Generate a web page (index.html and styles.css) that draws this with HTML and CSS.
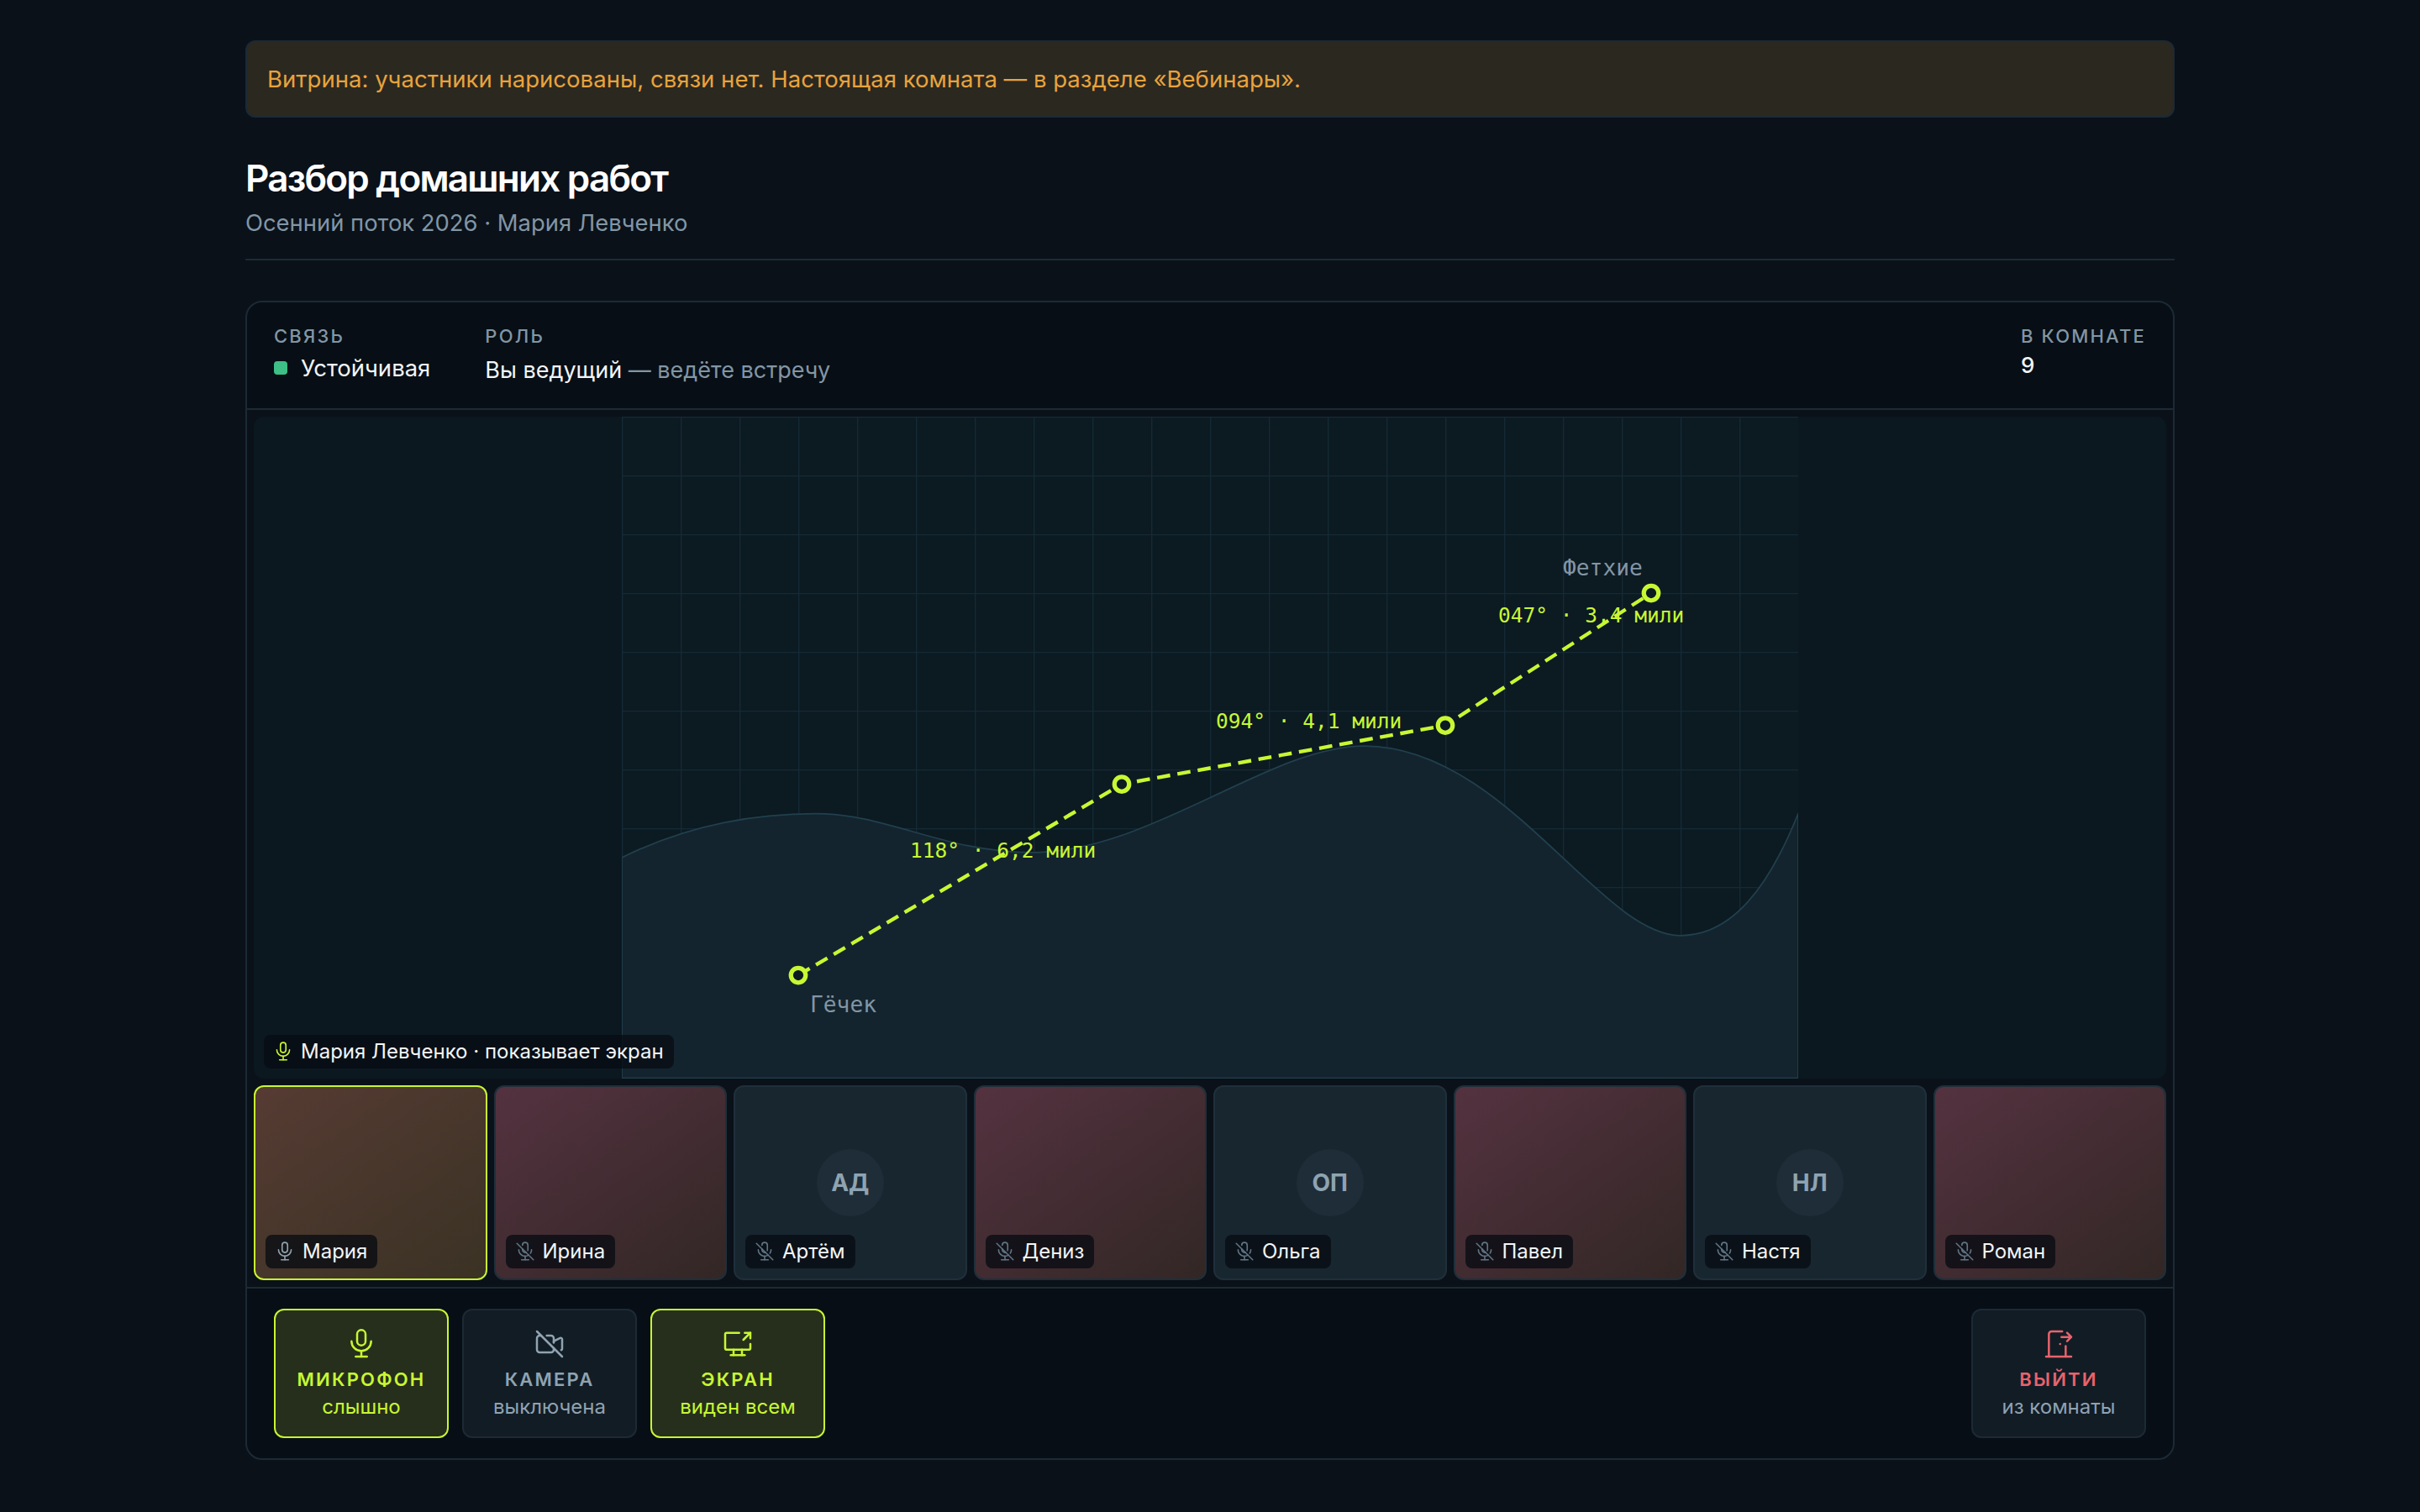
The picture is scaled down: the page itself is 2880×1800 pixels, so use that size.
FILE: index.html
```html
<!DOCTYPE html>
<html lang="ru">
<head>
    <meta charset="UTF-8">
    <title>Разбор домашних работ</title>
    <link rel="stylesheet" href="styles.css">
</head>
<body>
    <svg class="icon-defs" width="0" height="0">
        <symbol id="i-mic" viewBox="0 0 24 24">
            <path d="M9 5a3 3 0 0 1 6 0v5a3 3 0 0 1 -6 0z"/>
            <path d="M5 10a7 7 0 0 0 14 0"/>
            <path d="M8 21h8"/>
            <path d="M12 17v4"/>
        </symbol>
        <symbol id="i-mic-off" viewBox="0 0 24 24">
            <path d="M3 3l18 18"/>
            <path d="M9 5a3 3 0 0 1 6 0v5a3 3 0 0 1 -.13 .874m-2 2a3 3 0 0 1 -3.87 -2.872v-1"/>
            <path d="M5 10a7 7 0 0 0 10.846 5.85m2 -2a6.967 6.967 0 0 0 1.152 -3.85"/>
            <path d="M8 21h8"/>
            <path d="M12 17v4"/>
        </symbol>
        <symbol id="i-video-off" viewBox="0 0 24 24">
            <path d="M3 3l18 18"/>
            <path d="M15 11v-1l4.553 -2.276a1 1 0 0 1 1.447 .894v6.764a1 1 0 0 1 -.675 .946"/>
            <path d="M10 6h3a2 2 0 0 1 2 2v3m0 4v1a2 2 0 0 1 -2 2h-8a2 2 0 0 1 -2 -2v-8a2 2 0 0 1 2 -2h1"/>
        </symbol>
        <symbol id="i-share" viewBox="0 0 24 24">
            <path d="M21 12v3a1 1 0 0 1 -1 1h-16a1 1 0 0 1 -1 -1v-10a1 1 0 0 1 1 -1h9"/>
            <path d="M7 20h10"/>
            <path d="M9 16v4"/>
            <path d="M15 16v4"/>
            <path d="M17 4h4v4"/>
            <path d="M16 9l5 -5"/>
        </symbol>
        <symbol id="i-exit" viewBox="0 0 24 24">
            <path d="M13 12v.01"/>
            <path d="M3 21h18"/>
            <path d="M5 21v-16a2 2 0 0 1 2 -2h7.5m2.5 10.5v7.5"/>
            <path d="M14 7h7m-3 -3l3 3l-3 3"/>
        </symbol>
    </svg>

    <div class="container">
        <div class="notice">Витрина: участники нарисованы, связи нет. Настоящая комната — в разделе «Вебинары».</div>

        <div class="page-head">
            <h1>Разбор домашних работ</h1>
            <p>Осенний поток 2026 · Мария Левченко</p>
        </div>

        <div class="room">
            <div class="room-bar">
                <div class="stat">
                    <div class="stat-label">Связь</div>
                    <div class="stat-value status"><span class="status-dot"></span>Устойчивая</div>
                </div>
                <div class="stat">
                    <div class="stat-label">Роль</div>
                    <div class="stat-value role">Вы ведущий <span class="muted">— ведёте встречу</span></div>
                </div>
                <div class="stat stat-right">
                    <div class="stat-label">В комнате</div>
                    <div class="stat-value count">9</div>
                </div>
            </div>

            <div class="room-body">
                <div class="stage">
                    <svg class="chart" viewBox="0 0 1600 900">
                        <defs>
                            <pattern id="grid" width="80" height="80" patternUnits="userSpaceOnUse">
                                <path class="grid-line" d="M80 0H0V80"/>
                            </pattern>
                        </defs>
                        <rect class="chart-bg" width="1600" height="900"/>
                        <rect class="chart-grid" fill="url(#grid)" width="1600" height="900"/>
                        <path class="land" d="M0 600C80 560 170 540 264 540C360 540 440 593 557 593C720 593 880 448 1010 448C1200 448 1330 706 1440 706C1510 706 1560 640 1600 540V900H0Z"/>
                        <path class="route" d="M240 760L680 500L1120 420L1400 240"/>
                        <circle class="stop" cx="240" cy="760" r="10"/>
                        <circle class="stop" cx="680" cy="500" r="10"/>
                        <circle class="stop" cx="1120" cy="420" r="10"/>
                        <circle class="stop" cx="1400" cy="240" r="10"/>
                        <text class="place" x="256" y="810">Гёчек</text>
                        <text class="place" x="1280" y="216">Фетхие</text>
                        <text class="leg" x="392" y="600">118° · 6,2 мили</text>
                        <text class="leg" x="808" y="424">094° · 4,1 мили</text>
                        <text class="leg" x="1192" y="280">047° · 3,4 мили</text>
                    </svg>
                    <div class="name-tag stage-tag"><svg class="tag-icon on"><use href="#i-mic"/></svg>Мария Левченко · показывает экран</div>
                </div>

                <div class="tiles">
                    <div class="tile me"><div class="name-tag"><svg class="tag-icon"><use href="#i-mic"/></svg>Мария</div></div>
                    <div class="tile video"><div class="name-tag"><svg class="tag-icon off"><use href="#i-mic-off"/></svg>Ирина</div></div>
                    <div class="tile"><div class="avatar">АД</div><div class="name-tag"><svg class="tag-icon off"><use href="#i-mic-off"/></svg>Артём</div></div>
                    <div class="tile video"><div class="name-tag"><svg class="tag-icon off"><use href="#i-mic-off"/></svg>Дениз</div></div>
                    <div class="tile"><div class="avatar">ОП</div><div class="name-tag"><svg class="tag-icon off"><use href="#i-mic-off"/></svg>Ольга</div></div>
                    <div class="tile video"><div class="name-tag"><svg class="tag-icon off"><use href="#i-mic-off"/></svg>Павел</div></div>
                    <div class="tile"><div class="avatar">НЛ</div><div class="name-tag"><svg class="tag-icon off"><use href="#i-mic-off"/></svg>Настя</div></div>
                    <div class="tile video"><div class="name-tag"><svg class="tag-icon off"><use href="#i-mic-off"/></svg>Роман</div></div>
                </div>
            </div>

            <div class="controls">
                <button class="control active">
                    <svg class="control-icon"><use href="#i-mic"/></svg>
                    <span class="control-label">Микрофон</span>
                    <span class="control-sub">слышно</span>
                </button>
                <button class="control">
                    <svg class="control-icon"><use href="#i-video-off"/></svg>
                    <span class="control-label">Камера</span>
                    <span class="control-sub">выключена</span>
                </button>
                <button class="control active">
                    <svg class="control-icon"><use href="#i-share"/></svg>
                    <span class="control-label">Экран</span>
                    <span class="control-sub">виден всем</span>
                </button>
                <button class="control leave">
                    <svg class="control-icon"><use href="#i-exit"/></svg>
                    <span class="control-label">Выйти</span>
                    <span class="control-sub">из комнаты</span>
                </button>
            </div>
        </div>
    </div>
</body>
</html>
```
FILE: styles.css
```css
* {
    margin: 0;
    padding: 0;
    box-sizing: border-box;
}

body {
    font-family: Inter, "Noto Sans", sans-serif;
    background: #0a1119;
    color: #f2f5f7;
}

.icon-defs {
    position: absolute;
}

svg {
    fill: none;
    stroke: currentColor;
    stroke-width: 1.5;
    stroke-linecap: round;
    stroke-linejoin: round;
}

.container {
    width: 2296px;
    margin: 0 auto;
    padding-top: 48px;
}

.notice {
    height: 92px;
    display: flex;
    align-items: center;
    padding: 0 24px;
    background: #2b2820;
    border: 2px solid #1c2a35;
    border-radius: 12px;
    color: #e8a33d;
    font-size: 27.55px;
}

.page-head {
    margin-top: 46px;
    padding-bottom: 22px;
    border-bottom: 2px solid #1c2a35;
}

.page-head h1 {
    font-size: 44px;
    line-height: 53px;
    font-weight: 600;
    letter-spacing: -0.04em;
    color: #ffffff;
}

.page-head p {
    margin-top: 5px;
    font-size: 27.4px;
    line-height: 42px;
    color: #8296a5;
}

.room {
    margin-top: 48px;
    background: #070e15;
    border: 2px solid #1c2a35;
    border-radius: 20px;
    overflow: hidden;
}

.room-bar {
    display: flex;
    gap: 65px;
    height: 128px;
    padding: 25px 32px 0;
    border-bottom: 2px solid #1c2a35;
}

.stat-right {
    margin-left: auto;
}

.stat-label {
    font-size: 22px;
    line-height: 30px;
    font-weight: 500;
    letter-spacing: 0.1em;
    text-transform: uppercase;
    color: #8296a5;
}

.stat-value {
    font-size: 27.5px;
    line-height: 40px;
}

.status {
    display: flex;
    align-items: center;
    gap: 16px;
    margin-top: 3px;
}

.status-dot {
    width: 16px;
    height: 16px;
    border-radius: 4px;
    background: #3dbf85;
}

.role {
    margin-top: 6px;
    font-size: 27px;
}

.muted {
    color: #8296a5;
}

.count {
    margin-top: 3px;
    font-weight: 500;
    font-size: 26px;
    line-height: 34px;
}

.room-body {
    padding: 8px;
    background: #0a1118;
    border-bottom: 2px solid #1c2a35;
}

.stage {
    position: relative;
    display: flex;
    justify-content: center;
    background: #0b1820;
    border-radius: 12px;
    overflow: hidden;
}

.chart {
    display: block;
    width: 1400px;
    height: 787.5px;
    stroke-linecap: butt;
}

.chart-bg,
.chart-grid {
    stroke: none;
}

.chart-bg {
    fill: #0c1a22;
}

.grid-line {
    fill: none;
    stroke: #142a35;
    stroke-width: 3;
}

.land {
    fill: #13242e;
    stroke: #21404d;
    stroke-width: 2;
}

.route {
    fill: none;
    stroke: #c8f733;
    stroke-width: 5;
    stroke-dasharray: 18 10;
}

.stop {
    fill: #0c1a22;
    stroke: #c8f733;
    stroke-width: 6;
}

.place {
    font-family: "DejaVu Sans Mono", monospace;
    font-size: 30px;
    fill: #8296a5;
    stroke: none;
}

.leg {
    font-family: "DejaVu Sans Mono", monospace;
    font-size: 28px;
    fill: #c8f733;
    stroke: none;
}

.name-tag {
    position: absolute;
    left: 12px;
    bottom: 12px;
    height: 40px;
    display: flex;
    align-items: center;
    gap: 8px;
    padding: 0 12px 0 10px;
    background: rgba(8, 12, 18, 0.78);
    border-radius: 8px;
    font-size: 24px;
    color: #f2f5f7;
    white-space: nowrap;
}

.tag-icon {
    width: 26px;
    height: 26px;
    color: #8fa3b1;
}

.tag-icon.off {
    color: #5f7585;
}

.tag-icon.on {
    color: #c8f733;
}

.tiles {
    display: grid;
    grid-template-columns: repeat(8, 1fr);
    gap: 8px;
    margin-top: 8px;
}

.tile {
    position: relative;
    height: 232px;
    display: flex;
    align-items: center;
    justify-content: center;
    background: #18262f;
    border: 2px solid #1f2f3b;
    border-radius: 12px;
}

.tile.video {
    background: linear-gradient(145deg, #543240, #322725);
}

.tile.me {
    background: linear-gradient(145deg, #563b33, #3a3224);
    border-color: #c8f733;
}

.avatar {
    width: 80px;
    height: 80px;
    display: flex;
    align-items: center;
    justify-content: center;
    border-radius: 50%;
    background: #1e2d38;
    color: #8fa3b1;
    font-size: 28px;
    font-weight: 700;
}

.controls {
    display: flex;
    gap: 16px;
    padding: 24px 32px;
}

.control {
    width: 208px;
    height: 154px;
    display: flex;
    flex-direction: column;
    align-items: center;
    padding-top: 20px;
    background: #121c25;
    border: 2px solid #1c2a35;
    border-radius: 12px;
    color: #8fa3b1;
    font-family: inherit;
}

.control-icon {
    width: 40px;
    height: 40px;
    margin-bottom: 7px;
}

.control-label {
    font-size: 22px;
    line-height: 30px;
    font-weight: 600;
    letter-spacing: 0.1em;
    text-transform: uppercase;
}

.control-sub {
    margin-top: 2px;
    font-size: 24px;
    line-height: 32px;
}

.control.active {
    background: #262f1b;
    border-color: #c8f733;
    color: #c8f733;
}

.control.leave {
    margin-left: auto;
    color: #e8636c;
}

.control.leave .control-sub {
    color: #8fa3b1;
}
```
